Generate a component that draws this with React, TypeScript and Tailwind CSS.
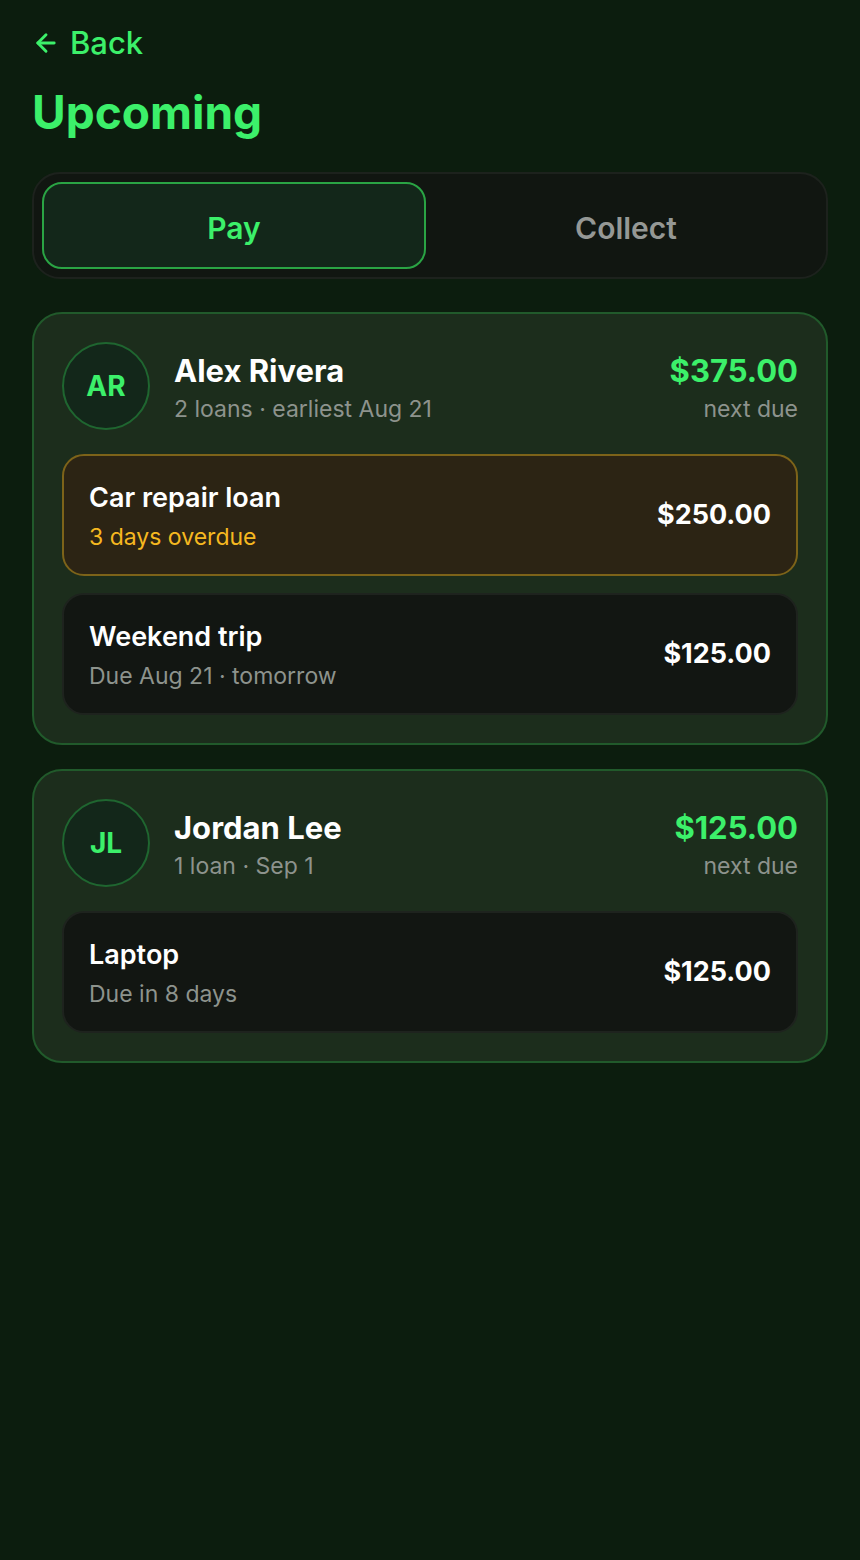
import { ArrowLeft } from 'lucide-react';

interface Loan {
  title: string;
  sub: string;
  amount: string;
  overdue?: boolean;
}

interface Person {
  initials: string;
  name: string;
  summary: string;
  next: string;
  loans: Loan[];
}

const people: Person[] = [
  {
    initials: 'AR',
    name: 'Alex Rivera',
    summary: '2 loans · earliest Aug 21',
    next: '$375.00',
    loans: [
      { title: 'Car repair loan', sub: '3 days overdue', amount: '$250.00', overdue: true },
      { title: 'Weekend trip', sub: 'Due Aug 21 · tomorrow', amount: '$125.00' },
    ],
  },
  {
    initials: 'JL',
    name: 'Jordan Lee',
    summary: '1 loan · Sep 1',
    next: '$125.00',
    loans: [{ title: 'Laptop', sub: 'Due in 8 days', amount: '$125.00' }],
  },
];

function LoanRow({ loan }: { loan: Loan }) {
  return (
    <div
      className={`flex items-center justify-between h-[122px] px-[25px] rounded-[22px] border-2 ${
        loan.overdue ? 'bg-[#2c2414] border-[#7d6319]' : 'bg-[#121612] border-[#1e231e]'
      }`}
    >
      <div className="flex flex-col gap-[7px] pt-[3px]">
        <span className="text-[27px] leading-[34px] font-semibold text-white">{loan.title}</span>
        <span className={`text-[23px] leading-[30px] ${loan.overdue ? 'text-[#f6b820]' : 'text-[#8d938d]'}`}>
          {loan.sub}
        </span>
      </div>
      <span className="text-[27px] font-bold text-white">{loan.amount}</span>
    </div>
  );
}

function PersonCard({ person }: { person: Person }) {
  return (
    <section className="bg-[#1c2d1c] border-2 border-[#215a2b] rounded-[30px] p-[28px] flex flex-col gap-[24px]">
      <div className="flex items-center gap-[24px]">
        <div className="w-[88px] h-[88px] shrink-0 rounded-full border-2 border-[#1f6630] bg-[#13271a] flex items-center justify-center text-[28px] font-bold text-[#3cf06a]">
          {person.initials}
        </div>
        <div className="flex-1 flex flex-col gap-[4px] pt-[3px]">
          <span className="text-[31px] leading-[38px] font-bold text-white">{person.name}</span>
          <span className="text-[23px] leading-[30px] text-[#8d938d]">{person.summary}</span>
        </div>
        <div className="flex flex-col items-end gap-[4px] pt-[3px]">
          <span className="text-[31px] leading-[38px] font-bold text-[#3cf06a]">{person.next}</span>
          <span className="text-[23px] leading-[30px] text-[#8d938d]">next due</span>
        </div>
      </div>
      <div className="flex flex-col gap-[17px]">
        {person.loans.map((l) => (
          <LoanRow key={l.title} loan={l} />
        ))}
      </div>
    </section>
  );
}

export default function App() {
  return (
    <div className="min-h-[1560px] bg-[#0c1d0e] px-8 pt-[25px] font-['Inter','Liberation_Sans',sans-serif]">
      <button className="flex items-center gap-[10px] text-[31px] leading-[36px] font-medium text-[#3cf06a]">
        <ArrowLeft size={28} strokeWidth={2.5} />
        Back
      </button>

      <h1 className="mt-[23px] text-[46px] leading-[56px] font-bold text-[#3cf06a]">Upcoming</h1>

      <div className="mt-[32px] h-[107px] rounded-[28px] bg-[#111611] border-2 border-[#1d221d] p-[8px] grid grid-cols-2 gap-[8px]">
        <div className="rounded-[20px] bg-[#13271a] border-2 border-[#2aa444] flex items-center justify-center pt-[5px] text-[30px] font-semibold text-[#3cf06a]">
          Pay
        </div>
        <div className="flex items-center justify-center pt-[5px] text-[30px] font-semibold text-[#959895]">Collect</div>
      </div>

      <div className="mt-[33px] flex flex-col gap-[24px]">
        {people.map((p) => (
          <PersonCard key={p.name} person={p} />
        ))}
      </div>
    </div>
  );
}
